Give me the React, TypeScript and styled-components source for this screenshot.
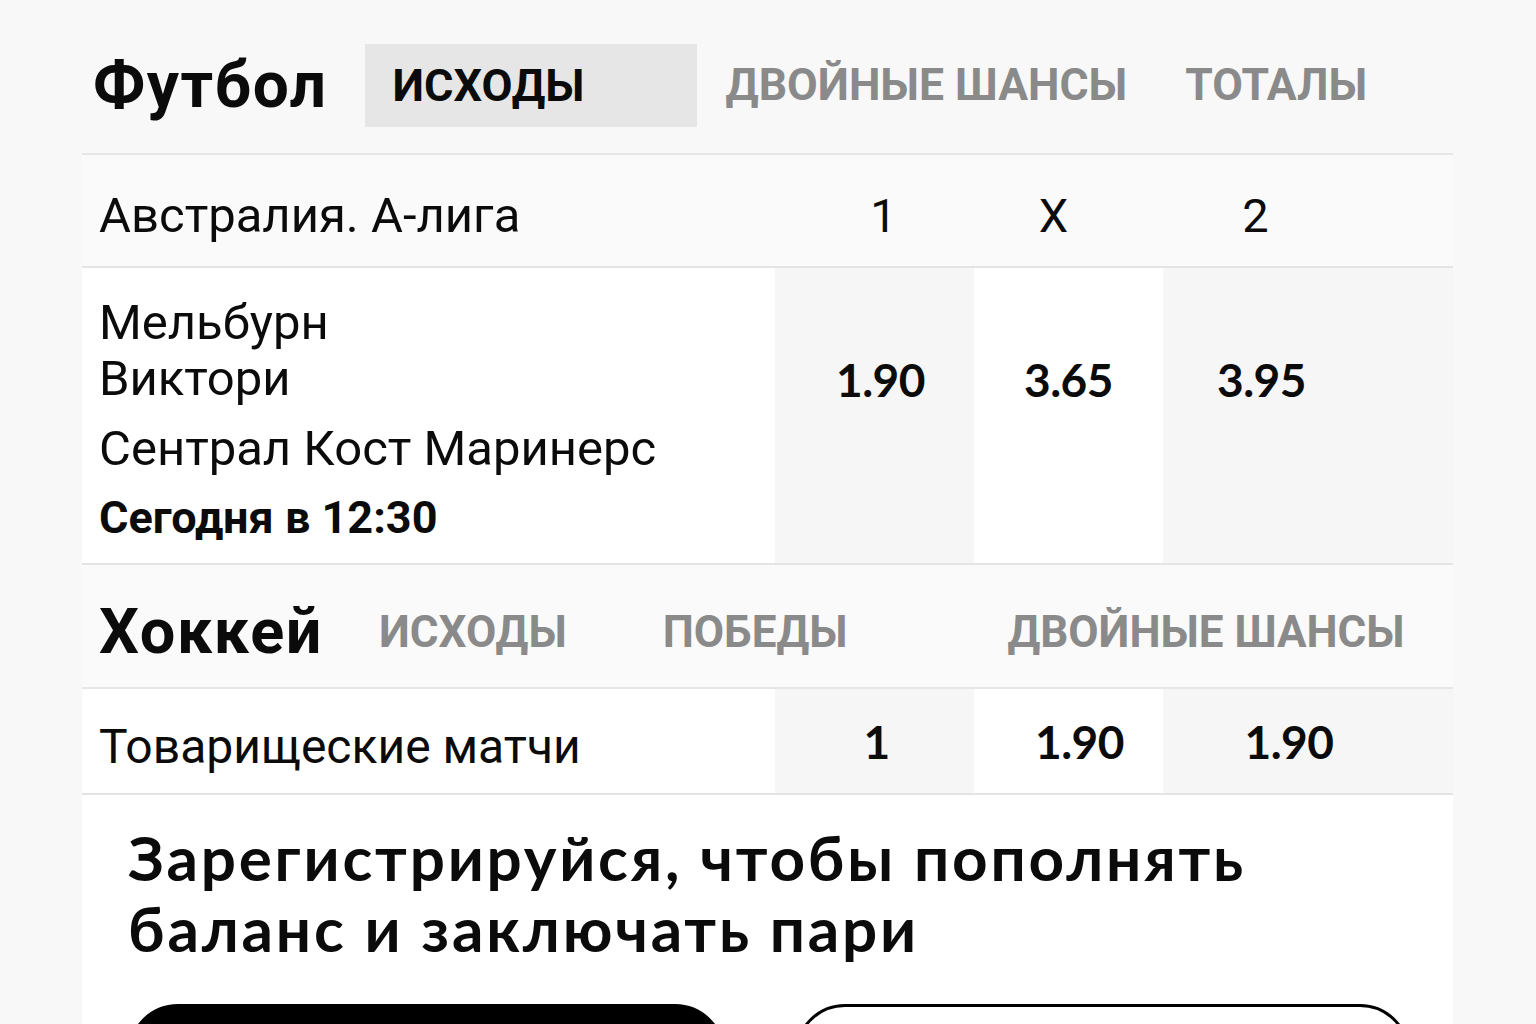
import React from "react";
import styled, { createGlobalStyle } from "styled-components";

const GlobalStyle = createGlobalStyle`
  html, body { margin: 0; padding: 0; }
  body {
    background: #f8f8f8;
    font-family: Roboto, "Liberation Sans", Arial, sans-serif;
    color: #0a0a0a;
  }
`;

const Page = styled.div`
  width: 1536px;
  height: 1024px;
  overflow: hidden;
  background: #f8f8f8;
`;

const Board = styled.div`
  margin-left: 82px;
  width: 1371px;
  display: flex;
  flex-direction: column;
`;

const SportHeader = styled.div<{ $top: number; $bottom: number; $left: number; $bg?: string }>`
  display: flex;
  align-items: center;
  padding: ${(p) => p.$top}px 0 ${(p) => p.$bottom}px ${(p) => p.$left}px;
  background: ${(p) => p.$bg || "transparent"};
  border-bottom: 2px solid #e6e6e6;
`;

const SportTitle = styled.h2<{ $size: number }>`
  margin: 0;
  font-family: Roboto, "Liberation Sans", sans-serif;
  font-weight: 700;
  font-size: ${(p) => p.$size}px;
  letter-spacing: 1.5px;
  line-height: 1;
  color: #0b0b0b;
`;

const Tab = styled.div<{ $active?: boolean; $gap: number; $size?: number }>`
  margin-left: ${(p) => p.$gap}px;
  font-family: Roboto, "Liberation Sans", sans-serif;
  font-weight: 700;
  font-size: ${(p) => p.$size || 45}px;
  line-height: 1;
  text-transform: uppercase;
  color: ${(p) => (p.$active ? "#0b0b0b" : "#8a8a8a")};
  ${(p) =>
    p.$active
      ? `background: #e6e6e6; width: 332px; height: 83px; box-sizing: border-box; padding-left: 28px; display: flex; align-items: center;`
      : ""}
`;

const Row = styled.div<{ $height: number; $bg?: string }>`
  display: grid;
  grid-template-columns: 693px 199px 189px 290px;
  height: ${(p) => p.$height}px;
  background: ${(p) => p.$bg || "transparent"};
  border-bottom: 2px solid #e4e4e4;
`;

const LeagueName = styled.div<{ $size: number; $white?: boolean }>`
  display: flex;
  align-items: center;
  padding: 10px 0 0 17px;
  font-size: ${(p) => p.$size}px;
  font-weight: 400;
  color: #0b0b0b;
  background: ${(p) => (p.$white ? "#ffffff" : "transparent")};
`;

const HeadCell = styled.div<{ $pl?: number; $pr?: number }>`
  display: flex;
  align-items: center;
  justify-content: center;
  padding-top: 10px;
  padding-left: ${(p) => p.$pl || 0}px;
  padding-right: ${(p) => p.$pr || 0}px;
  font-size: 47px;
  font-weight: 400;
  color: #0b0b0b;
`;

const Teams = styled.div`
  background: #ffffff;
  padding: 27px 0 0 17px;
  display: flex;
  flex-direction: column;
`;

const TeamName = styled.div<{ $mt?: number }>`
  margin-top: ${(p) => p.$mt || 0}px;
  font-size: 49px;
  line-height: 56px;
  font-weight: 400;
  color: #0b0b0b;
`;

const MatchTime = styled.div`
  margin-top: 13px;
  font-size: 45px;
  line-height: 56px;
  font-weight: 700;
  color: #0b0b0b;
`;

const OddsCell = styled.div<{ $shade?: boolean; $top?: number; $pl?: number; $pr?: number; $center?: boolean }>`
  background: ${(p) => (p.$shade ? "#f6f6f6" : "#ffffff")};
  display: flex;
  justify-content: center;
  align-items: ${(p) => (p.$center ? "center" : "flex-start")};
  padding-top: ${(p) => p.$top || 0}px;
  padding-left: ${(p) => p.$pl || 0}px;
  padding-right: ${(p) => p.$pr || 0}px;
  font-family: Lato, "Open Sans", Roboto, sans-serif;
  font-weight: 700;
  font-size: 46px;
  letter-spacing: -0.5px;
  color: #0b0b0b;
`;

const Promo = styled.div`
  background: #ffffff;
  padding: 27px 43px 0 46px;
  display: flex;
  flex-direction: column;
`;

const PromoTitle = styled.h1`
  margin: 0;
  font-family: Lato, "Open Sans", Roboto, sans-serif;
  font-weight: 700;
  font-size: 62px;
  line-height: 71px;
  letter-spacing: 2.8px;
  color: #0b0b0b;
`;

const Buttons = styled.div`
  display: flex;
  gap: 70px;
  margin-top: 40px;
`;

const PillButton = styled.button<{ $primary?: boolean; $width: number }>`
  width: ${(p) => p.$width}px;
  height: 110px;
  box-sizing: border-box;
  padding: 42px 0 0;
  border-radius: 50px;
  border: 3px solid #000;
  background: ${(p) => (p.$primary ? "#000" : "#fff")};
  color: ${(p) => (p.$primary ? "#fff" : "#000")};
  font-family: Lato, Roboto, sans-serif;
  font-size: 32px;
  line-height: 34px;
  font-weight: 700;
  display: flex;
  align-items: flex-start;
  justify-content: center;
`;

export default function App() {
  return (
    <Page>
      <GlobalStyle />
      <Board>
        <SportHeader $top={44} $bottom={26} $left={11}>
          <SportTitle $size={64}>Футбол</SportTitle>
          <Tab $active $gap={37}>исходы</Tab>
          <Tab $gap={29} $size={44.5}>Двойные шансы</Tab>
          <Tab $gap={58} $size={44.5}>Тоталы</Tab>
        </SportHeader>
        <Row $height={111} $bg="#fafafa">
          <LeagueName $size={49}>Австралия. А-лига</LeagueName>
          <HeadCell $pl={18}>1</HeadCell>
          <HeadCell $pr={30}>X</HeadCell>
          <HeadCell $pr={105}>2</HeadCell>
        </Row>
        <Row $height={295}>
          <Teams>
            <TeamName>
              Мельбурн
              <br />
              Виктори
            </TeamName>
            <TeamName $mt={14}>Сентрал Кост Маринерс</TeamName>
            <MatchTime>Сегодня в 12:30</MatchTime>
          </Teams>
          <OddsCell $shade $top={84} $pl={12}>1.90</OddsCell>
          <OddsCell $top={84}>3.65</OddsCell>
          <OddsCell $shade $top={84} $pr={93}>3.95</OddsCell>
        </Row>
        <SportHeader $top={35} $bottom={24} $left={17} $bg="#fafafa">
          <SportTitle $size={63}>Хоккей</SportTitle>
          <Tab $gap={56} $size={44}>Исходы</Tab>
          <Tab $gap={96} $size={44}>Победы</Tab>
          <Tab $gap={160} $size={44}>Двойные шансы</Tab>
        </SportHeader>
        <Row $height={104}>
          <LeagueName $size={48} $white>Товарищеские матчи</LeagueName>
          <OddsCell $shade $center $pl={4}>1</OddsCell>
          <OddsCell $center $pl={22}>1.90</OddsCell>
          <OddsCell $shade $center $pr={38}>1.90</OddsCell>
        </Row>
        <Promo>
          <PromoTitle>
            Зарегистрируйся, чтобы пополнять
            <br />
            баланс и заключать пари
          </PromoTitle>
          <Buttons>
            <PillButton $primary $width={597}>Регистрация</PillButton>
            <PillButton $width={615}>Войти</PillButton>
          </Buttons>
        </Promo>
      </Board>
    </Page>
  );
}
